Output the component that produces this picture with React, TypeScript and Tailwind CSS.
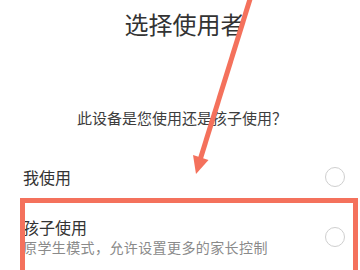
const font = { fontFamily: '"Noto Sans CJK SC", "Noto Sans", sans-serif' };

function Radio() {
  return <span className="block w-5 h-5 rounded-full border border-[#cfcfcf] bg-white shrink-0" />;
}

export default function App() {
  return (
    <div className="relative w-[360px] h-[270px] overflow-hidden bg-white" style={font}>
      {/* Header */}
      <h1 className="mt-[12px] pl-[9px] text-center text-[24px] leading-[24px] text-[#333333]">选择使用者</h1>
      <p className="mt-[74px] pl-[4px] text-center text-[15px] leading-[15px] text-[#3d3d3d]">
        此设备是您使用还是孩子使用？
      </p>

      {/* Options */}
      <div className="mt-[42px] pl-[23px] pr-[15px]">
        <div className="flex items-center justify-between h-5">
          <span className="text-[16px] leading-[16px] text-[#333333]">我使用</span>
          <Radio />
        </div>
        <div className="mt-[32px] flex items-center justify-between">
          <div className="flex flex-col gap-[5px]">
            <span className="text-[16px] leading-[16px] text-[#333333]">孩子使用</span>
            <span className="text-[14px] leading-[15px] text-[#8a8a8a] tracking-[0.4px]">原学生模式，允许设置更多的家长控制</span>
          </div>
          <Radio />
        </div>
      </div>

      {/* Annotation overlay */}
      <svg className="absolute inset-0 pointer-events-none" width="360" height="270" viewBox="0 0 360 270">
        <line x1="251" y1="-4" x2="200" y2="160" stroke="#f4715c" strokeWidth="5" />
        <polygon points="196,174 208.5,160 193,155" fill="#f4715c" />
        <rect x="22.5" y="200.5" width="333" height="80" fill="none" stroke="#f4715c" strokeWidth="5" />
      </svg>
    </div>
  );
}
